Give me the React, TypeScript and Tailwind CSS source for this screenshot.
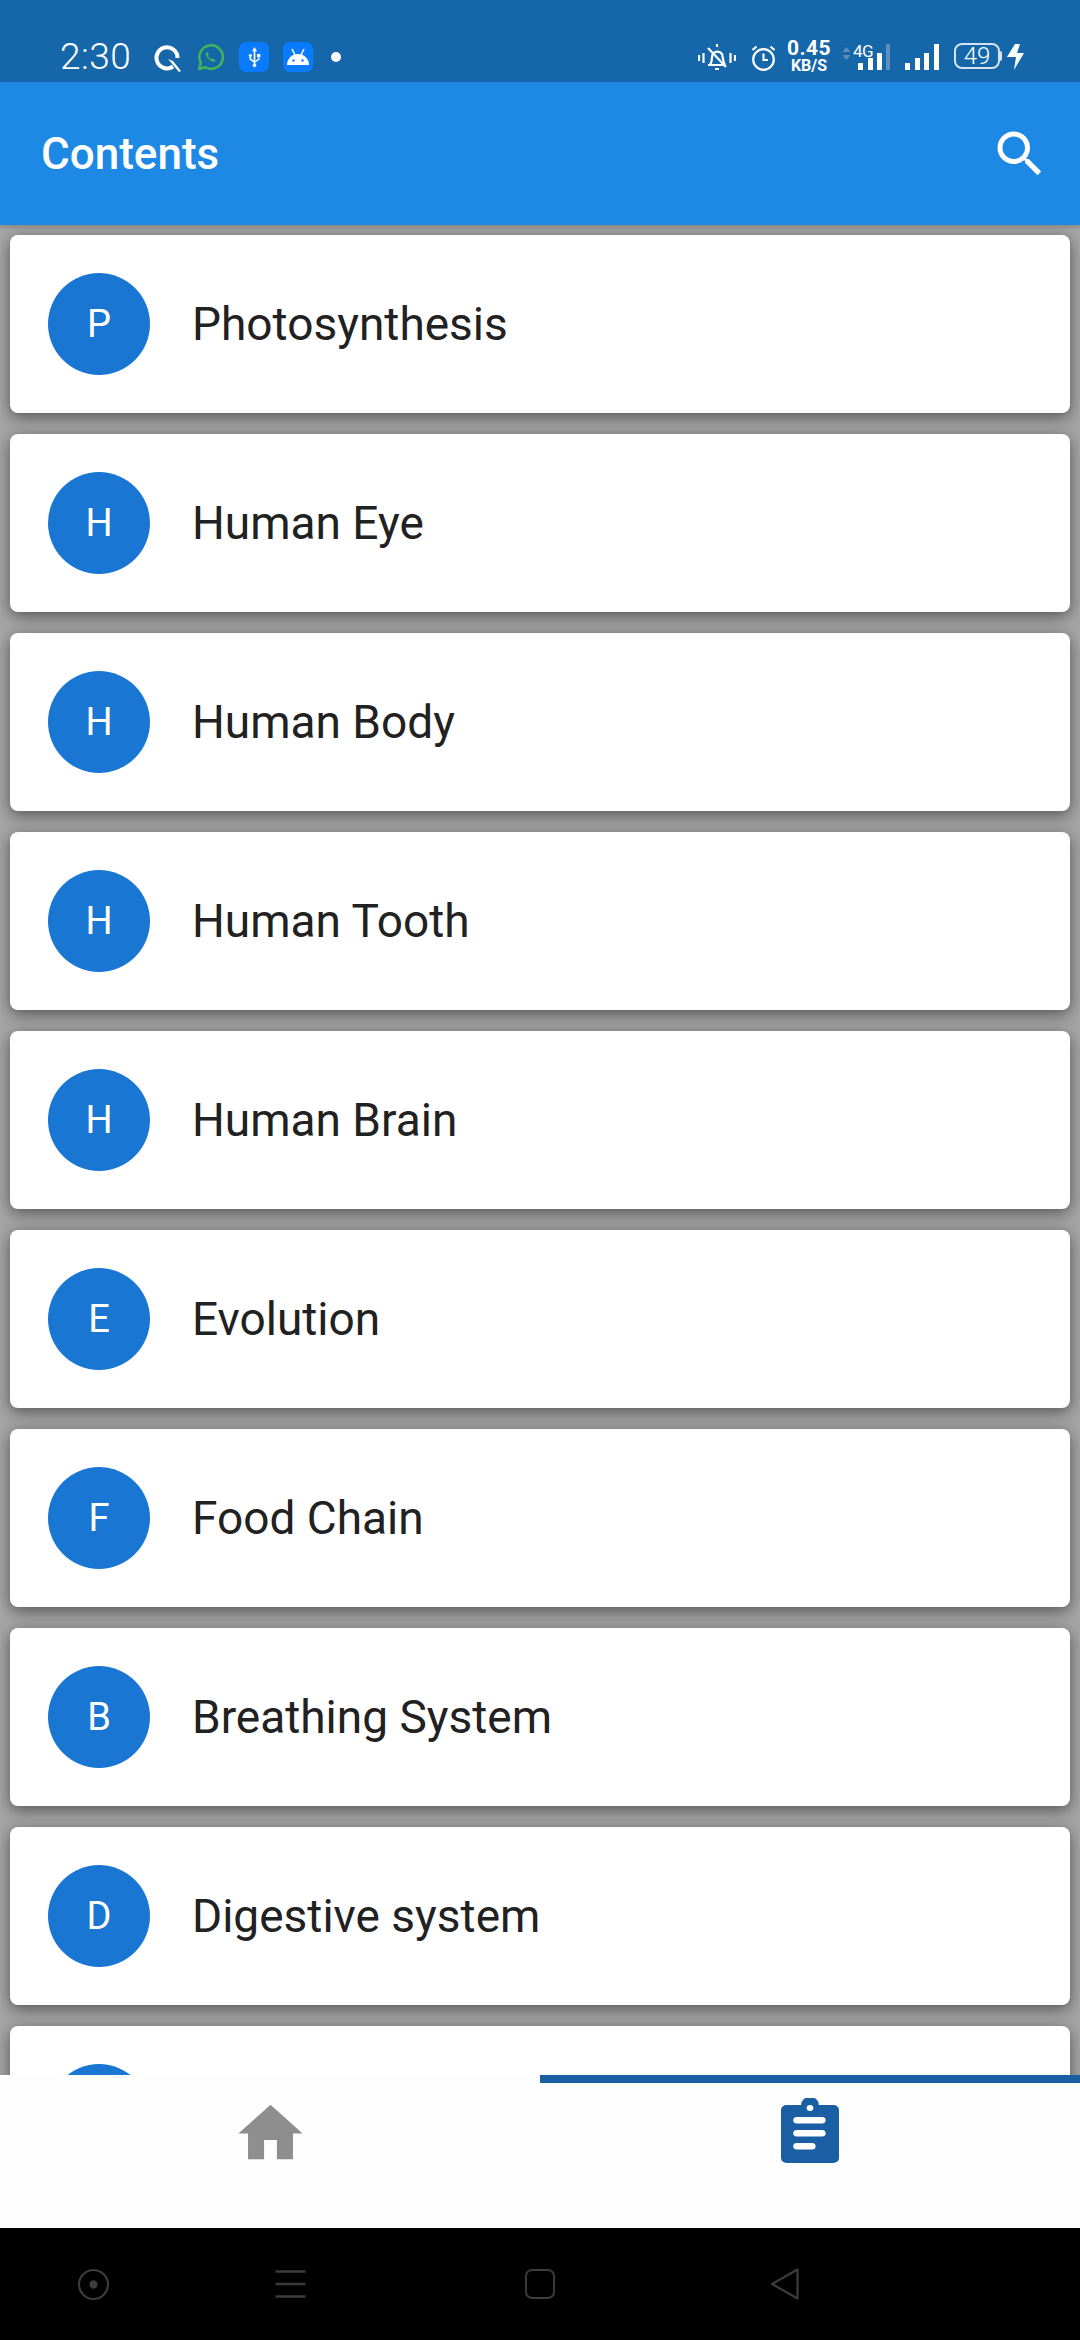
const topics = [
  { letter: 'P', title: 'Photosynthesis' },
  { letter: 'H', title: 'Human Eye' },
  { letter: 'H', title: 'Human Body' },
  { letter: 'H', title: 'Human Tooth' },
  { letter: 'H', title: 'Human Brain' },
  { letter: 'E', title: 'Evolution' },
  { letter: 'F', title: 'Food Chain' },
  { letter: 'B', title: 'Breathing System' },
  { letter: 'D', title: 'Digestive system' },
  { letter: '', title: '' },
]

function StatusBar() {
  return (
    <div className="flex h-[82px] items-start bg-[#1667aa] pl-[60px] text-white">
      <span className="mt-[37px] w-[70px] text-[37px] leading-[40px] font-light tracking-[0.5px]">2:30</span>

      <svg className="mt-[44px] ml-[24px]" width="28" height="28" viewBox="0 0 28 28" fill="none">
        <path d="M19 22.500A10.500 10.500 0 1 1 23.500 14" stroke="white" strokeWidth="4" />
        <path d="M14 15l5 2 8 10-2 1z" fill="white" />
      </svg>

      <svg className="mt-[44px] ml-[15px]" width="27" height="27" viewBox="0 0 26 26" fill="none">
        <path d="M2 24l1.700-6A11.300 11.300 0 1 1 8 22.400z" stroke="#3fb45c" strokeWidth="2.400" strokeLinejoin="round" />
        <path d="M9.500 7.500c-2 2-.8 4.600 1.600 7s5 3.600 7 1.600l-2.600-2.400-1.700 1c-1.500-.6-2.700-1.800-3.300-3.300l1-1.700z" fill="#3fb45c" />
      </svg>

      <div className="mt-[42px] ml-[15px] flex h-[30px] w-[30px] items-center justify-center rounded-[7px] bg-[#0a7aff]">
        <svg width="15" height="22" viewBox="0 0 18 24" fill="white">
          <path d="M9 0l3 5h-2v11.500l3.500-2.500v-2H12V8.500h4V12h-1v3l-5 3.600V20.500a2 2 0 1 1-2 0v-1.900L3 15v-3.200a1.800 1.800 0 1 1 2 0V14l3 2.200V5H6z" />
        </svg>
      </div>

      <div className="mt-[42px] ml-[14px] flex h-[30px] w-[30px] items-center justify-center rounded-[7px] bg-[#0a7aff]">
        <svg width="24" height="18" viewBox="0 0 24 18" fill="white">
          <path d="M1 17a11 11 0 0 1 22 0z" />
          <path d="M6 1l3 6M18 1l-3 6" stroke="white" strokeWidth="1.500" />
          <circle cx="7.500" cy="12.500" r="1.200" fill="#0a7aff" />
          <circle cx="16.500" cy="12.500" r="1.200" fill="#0a7aff" />
        </svg>
      </div>

      <div className="mt-[52px] ml-[18px] h-[10px] w-[10px] rounded-full bg-white" />

      <svg className="mt-[43px] ml-[357px]" width="38" height="30" viewBox="0 0 38 30" fill="none" stroke="white" strokeWidth="2.200">
        <path d="M1 12v6M5.500 10v10M32.500 10v10M37 12v6" />
        <path d="M10 22h17M12 22c2-3 2-5 2-8a5.500 5.500 0 0 1 10-3c1 3 .6 7 3 11" strokeLinejoin="round" />
        <path d="M10 5l18 19" />
        <path d="M17 26h4M19 1v3" />
      </svg>

      <svg className="mt-[45px] ml-[15px]" width="25" height="26" viewBox="0 0 25 26" fill="none" stroke="white" strokeWidth="2.200">
        <circle cx="12.500" cy="14.500" r="10.300" />
        <path d="M12.500 8.500v6.500h4.500M1.500 5l4-3.500M23.500 5l-4-3.500" />
      </svg>

      <div className="mt-[38px] ml-[11px] flex w-[44px] flex-col items-center font-['Roboto',sans-serif] font-bold">
        <span className="text-[21px] leading-[20px] tracking-[0.5px]">0.45</span>
        <span className="text-[16px] leading-[15px]">KB/S</span>
      </div>

      <svg className="mt-[47px] ml-[11px]" width="9" height="13" viewBox="0 0 9 13" fill="#5f8fc0">
        <path d="M4.500 0l4 5H.5zM4.500 13l4-5H.5z" />
      </svg>

      <div className="relative mt-[44px] ml-[2px] h-[26px] w-[37px]">
        <span className="absolute top-[-1px] left-0 font-['Roboto',sans-serif] text-[17px] leading-[16px] tracking-[-0.5px]">4G</span>
        <svg className="absolute top-0 left-0" width="37" height="26" viewBox="0 0 37 26">
          <rect x="5" y="19" width="5" height="7" fill="white" />
          <rect x="15" y="14" width="5" height="12" fill="white" />
          <rect x="24" y="9" width="5" height="17" fill="white" />
          <rect x="33" y="0" width="4" height="26" fill="#5f8fc0" />
        </svg>
      </div>

      <svg className="mt-[44px] ml-[15px]" width="34" height="26" viewBox="0 0 34 26" fill="white">
        <rect x="0" y="19" width="5" height="7" />
        <rect x="10" y="14" width="5" height="12" />
        <rect x="19" y="9" width="5" height="17" />
        <rect x="29" y="0" width="5" height="26" />
      </svg>

      <div className="mt-[43px] ml-[15px] flex h-[26px] w-[46px] items-center justify-center rounded-[8px] border-2 border-[#d5e3f0] font-['Roboto',sans-serif] text-[24px] leading-none font-light">
        49
      </div>
      <div className="mt-[51px] h-[10px] w-[2px] rounded-r-full bg-[#d5e3f0]" />

      <svg className="mt-[44px] ml-[5px]" width="17" height="26" viewBox="0 0 17 26" fill="white">
        <path d="M8 0h5l-3 9h7L7 26l2-13H0z" />
      </svg>
    </div>
  )
}

function AppBar() {
  return (
    <header className="relative z-10 shrink-0 shadow-[0_2px_4px_rgba(0,0,0,0.2)]">
      <StatusBar />
      <div className="flex h-[143px] items-center justify-between bg-[#1e88e5] pr-[30px] pl-[41px] text-white">
        <h1 className="text-[44px] font-medium">Contents</h1>
        <svg width="60" height="60" viewBox="0 0 24 24" fill="white">
          <path d="M15.500 14h-.79l-.28-.27A6.471 6.471 0 0 0 16 9.500 6.500 6.500 0 1 0 9.500 16c1.610 0 3.090-.59 4.230-1.570l.27.28v.79l5 4.990L20.490 19l-4.990-5zm-6 0C7.010 14 5 11.990 5 9.500S7.010 5 9.500 5 14 7.010 14 9.500 11.990 14 9.500 14z" />
        </svg>
      </div>
    </header>
  )
}

function TopicCard({ letter, title }: { letter: string; title: string }) {
  return (
    <div className="flex h-[178px] shrink-0 items-center rounded-[8px] bg-white pl-[38px] shadow-[0_4px_16px_rgba(0,0,0,0.5)]">
      <div className="flex h-[102px] w-[102px] items-center justify-center rounded-full bg-[#1976d2] text-[38px] text-white">
        {letter}
      </div>
      <span className="ml-[42px] text-[46px] text-[#212121]">{title}</span>
    </div>
  )
}

function BottomTabs() {
  return (
    <nav className="flex h-[153px] shrink-0 bg-[#fefefe]">
      <div className="w-[540px] pt-[20px] pl-[232px]">
        <svg width="77" height="77" viewBox="0 0 24 24" fill="#8e8e8e">
          <path d="M10 20v-6h4v6h5v-8h3L12 3 2 12h3v8z" />
        </svg>
      </div>
      <div className="flex-1 border-t-8 border-[#1a5fa3] pt-[15px] pl-[241px]">
        <svg width="58" height="65" viewBox="0 0 52 65" preserveAspectRatio="none" fill="#1a5fa3">
          <path d="M5 7h13a8 8 0 0 1 16 0h13a5 5 0 0 1 5 5v48a5 5 0 0 1-5 5H5a5 5 0 0 1-5-5V12a5 5 0 0 1 5-5z" />
          <circle cx="26" cy="10" r="3" fill="white" />
          <rect x="11" y="19" width="29" height="6.500" rx="3.250" fill="white" />
          <rect x="11" y="32" width="29" height="6.500" rx="3.250" fill="white" />
          <rect x="11" y="45" width="20" height="6.500" rx="3.250" fill="white" />
        </svg>
      </div>
    </nav>
  )
}

function SystemNav() {
  return (
    <div className="flex h-[112px] shrink-0 items-center bg-black pl-[78px]">
      <svg width="31" height="31" viewBox="0 0 30 30" fill="none" stroke="#3c3c3c" strokeWidth="2">
        <circle cx="15" cy="15" r="14" />
        <circle cx="15" cy="15" r="4" fill="#3c3c3c" stroke="none" />
      </svg>
      <svg className="ml-[166px]" width="31" height="28" viewBox="0 0 30 28" fill="none" stroke="#3c3c3c" strokeWidth="2.400">
        <path d="M0 1.500h30M0 14h30M0 26.500h30" />
      </svg>
      <svg className="ml-[219px]" width="30" height="30" viewBox="0 0 30 30" fill="none" stroke="#3c3c3c" strokeWidth="2">
        <rect x="1" y="1" width="28" height="28" rx="6" />
      </svg>
      <svg className="ml-[214px]" width="32" height="34" viewBox="0 0 30 34" fill="none" stroke="#3c3c3c" strokeWidth="2.200" strokeLinejoin="round">
        <path d="M27.500 2.500v29L2 17z" />
      </svg>
    </div>
  )
}

export default function App() {
  return (
    <div className="flex h-[2340px] w-[1080px] flex-col overflow-hidden font-['Roboto',sans-serif]">
      <AppBar />
      <main className="flex flex-1 flex-col gap-[21px] overflow-hidden bg-[#a6a6a6] px-[10px] pt-[10px]">
        {topics.map((topic, i) => (
          <TopicCard key={i} letter={topic.letter} title={topic.title} />
        ))}
      </main>
      <BottomTabs />
      <SystemNav />
    </div>
  )
}
